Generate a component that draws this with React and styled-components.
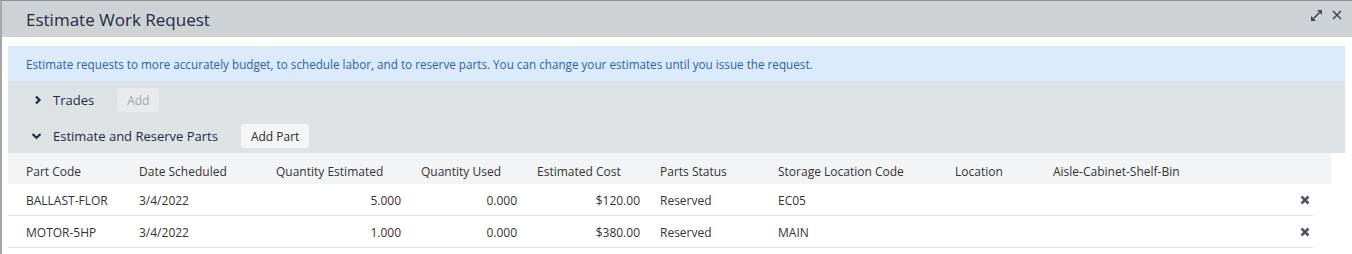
import React from "react";
import styled, { createGlobalStyle } from "styled-components";

const Global = createGlobalStyle`
  html, body { margin: 0; padding: 0; background: #fff; }
  body { font-family: "Open Sans", "Noto Sans", sans-serif; }
  * { box-sizing: border-box; }
`;

const Dialog = styled.div`
  width: 1352px;
  height: 254px;
  border-top: 1px solid #8f8f8f;
  border-left: 2px solid #a9a9a9;
  background: #fff;
  overflow: hidden;
`;

const TitleBar = styled.div`
  height: 36px;
  background: #ced2d5;
  display: flex;
  align-items: center;
  justify-content: space-between;
  padding: 0 10px 0 24px;
`;

const Title = styled.h1`
  margin: 0;
  font-size: 17px;
  font-weight: 400;
  color: #1e2a45;
`;

const TitleActions = styled.div`
  display: flex;
  align-items: center;
  gap: 10px;
  margin-top: -8px;
`;

const Body = styled.div`
  padding: 9px 7px 0 6px;
`;

const Banner = styled.div`
  height: 35px;
  background: #dcebfc;
  color: #2f5fa3;
  font-size: 11.7px;
  display: flex;
  align-items: center;
  padding-left: 18px;
`;

const Sections = styled.div`
  background: #dfe2e5;
  padding: 7px 0 5px 25px;
  display: flex;
  flex-direction: column;
  gap: 12px;
`;

const SectionRow = styled.div`
  display: flex;
  align-items: center;
  height: 24px;
`;

const Chevron = styled.span`
  width: 20px;
  display: flex;
  align-items: center;
  justify-content: flex-start;
  margin-left: ${(p) => (p.$open ? "-2px" : "1px")};
  margin-right: ${(p) => (p.$open ? "2px" : "-1px")};
`;

const SectionLabel = styled.span`
  font-size: 13px;
  color: #1e2a45;
  margin-right: 23px;
`;

const Button = styled.button`
  height: 24px;
  border: none;
  border-radius: 3px;
  padding: 0 10px;
  font-family: inherit;
  font-size: 12px;
  background: ${(p) => (p.disabled ? "#e8eaec" : "#f4f5f6")};
  color: ${(p) => (p.disabled ? "#a3a7ab" : "#2b2b2b")};
`;

const Table = styled.div`
  font-size: 12px;
  color: #333;
`;

const cols = "113px 137px 145px 116px 123px 118px 177px 98px 1fr 30px";

const HeadRow = styled.div`
  display: grid;
  grid-template-columns: ${cols};
  width: 1323px;
  height: 31px;
  background: #f3f4f6;
  padding-left: 18px;
  align-items: center;
  padding-top: 6px;
`;

const Row = styled.div`
  display: grid;
  grid-template-columns: ${cols};
  width: 1305px;
  height: 32px;
  padding-left: 18px;
  align-items: center;
  border-bottom: 1px solid #e3e4e6;
  padding-top: 1px;
`;

const Cell = styled.div`
  white-space: nowrap;
  text-align: ${(p) => (p.$num ? "right" : "left")};
  padding-right: ${(p) => (p.$num ? "20px" : "0")};
`;

const DelCell = styled.div`
  display: flex;
  justify-content: flex-start;
  padding-left: 17px;
`;

const ExpandIcon = () => (
  <svg width="11" height="11" viewBox="0 0 11 11">
    <line x1="2.5" y1="8.5" x2="8.5" y2="2.5" stroke="#3f464d" strokeWidth="1.6" />
    <polygon points="11,0 11,5 6,0" fill="#3f464d" />
    <polygon points="0,11 0,6 5,11" fill="#3f464d" />
  </svg>
);

const CloseIcon = () => (
  <svg width="10" height="10" viewBox="0 0 10 10">
    <path d="M1 1 L9 9 M9 1 L1 9" stroke="#3f464d" strokeWidth="1.5" />
  </svg>
);

const DelIcon = () => (
  <svg width="10" height="10" viewBox="0 0 10 10">
    <path d="M1.5 1.5 L8.5 8.5 M8.5 1.5 L1.5 8.5" stroke="#4a5661" strokeWidth="2.5" />
  </svg>
);

const ChevronRight = () => (
  <svg width="8" height="10" viewBox="0 0 8 10">
    <polyline points="2,1.5 5.5,5 2,8.5" fill="none" stroke="#1e2a45" strokeWidth="2.2" />
  </svg>
);

const ChevronDown = () => (
  <svg width="11" height="8" viewBox="0 0 11 8">
    <polyline points="1.5,2 5.5,5.8 9.5,2" fill="none" stroke="#1e2a45" strokeWidth="2.2" />
  </svg>
);

const headers = [
  "Part Code",
  "Date Scheduled",
  "Quantity Estimated",
  "Quantity Used",
  "Estimated Cost",
  "Parts Status",
  "Storage Location Code",
  "Location",
  "Aisle-Cabinet-Shelf-Bin",
];

const rows = [
  ["BALLAST-FLOR", "3/4/2022", "5.000", "0.000", "$120.00", "Reserved", "EC05", "", ""],
  ["MOTOR-5HP", "3/4/2022", "1.000", "0.000", "$380.00", "Reserved", "MAIN", "", ""],
];

const numCols = [2, 3, 4];

export default function App() {
  return (
    <>
      <Global />
      <Dialog>
        <TitleBar>
          <Title>Estimate Work Request</Title>
          <TitleActions>
            <ExpandIcon />
            <CloseIcon />
          </TitleActions>
        </TitleBar>
        <Body>
          <Banner>
            Estimate requests to more accurately budget, to schedule labor, and to reserve parts. You can change your estimates until you issue the request.
          </Banner>
          <Sections>
            <SectionRow>
              <Chevron>
                <ChevronRight />
              </Chevron>
              <SectionLabel>Trades</SectionLabel>
              <Button disabled>Add</Button>
            </SectionRow>
            <SectionRow>
              <Chevron $open>
                <ChevronDown />
              </Chevron>
              <SectionLabel>Estimate and Reserve Parts</SectionLabel>
              <Button>Add Part</Button>
            </SectionRow>
          </Sections>
          <Table>
            <HeadRow>
              {headers.map((h) => (
                <Cell key={h}>{h}</Cell>
              ))}
              <Cell />
            </HeadRow>
            {rows.map((r) => (
              <Row key={r[0]}>
                {r.map((v, i) => (
                  <Cell key={i} $num={numCols.includes(i)}>
                    {v}
                  </Cell>
                ))}
                <DelCell>
                  <DelIcon />
                </DelCell>
              </Row>
            ))}
          </Table>
        </Body>
      </Dialog>
    </>
  );
}
